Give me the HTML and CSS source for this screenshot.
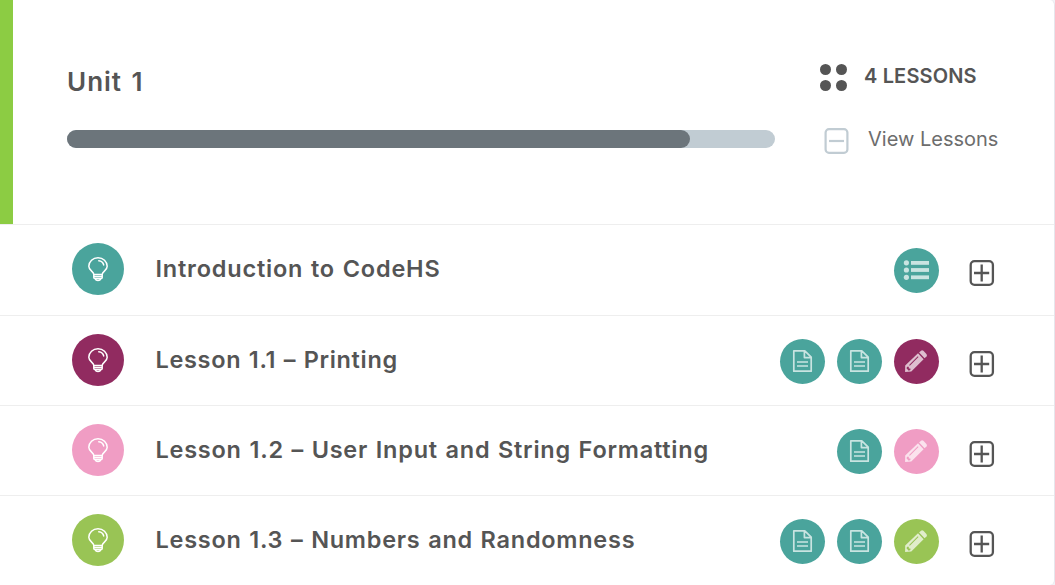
FILE: index.html
```html
<!DOCTYPE html>
<html lang="en">
<head>
<meta charset="utf-8">
<title>Unit 1</title>
<link rel="stylesheet" href="styles.css">
</head>
<body>
<svg class="symbols" aria-hidden="true">
  <symbol id="bulb" viewBox="0 0 52 52">
    <g fill="none" stroke="#fff" stroke-width="1.5" stroke-linecap="round" stroke-linejoin="round">
      <path d="M21.8 31.4C21.6 28.4 16.8 27.6 16.8 23.3a9.2 8.6 0 0 1 18.4 0c0 4.3-4.8 5.1-5 8.1z"/>
      <path d="M26.8 17.8c2.6.3 4.3 1.7 4.9 4.1"/>
      <path d="M21.8 31.4v3.2q0 .9.9.9h6.6q.9 0 .9-.9v-3.2M22 33.5h8M23.2 36c.9 2.1 4.7 2.1 5.6 0"/>
    </g>
  </symbol>
  <symbol id="doc" viewBox="0 0 45 45">
    <g fill="none" stroke="#fff" stroke-opacity=".7" stroke-width="1.7" stroke-linejoin="round">
      <path d="M13.8 11.8h11l6.4 6.4v14H13.8zM24.4 12v6.6h6.6M17 23h11M17 27h11"/>
    </g>
  </symbol>
  <symbol id="pencil" viewBox="0 0 45 45">
    <g fill="#fff" fill-opacity=".7">
      <path d="M25.1 13.4 27 11.7q1.2-1 2.4.1l3 3.1q1.1 1.3.1 2.5l-1.9 1.9z"/>
      <path fill-rule="evenodd" d="M24 14.3l5.6 6L17.3 32.4l-6.2.6.1-6.4zM23.8 17.3l-8.7 8.7.7.7 8.7-8.7zM13.1 27.7l-.6 1.6 2.2 2.4 1.7-.6v-1.7h-1.6v-1.7z"/>
    </g>
  </symbol>
  <symbol id="list" viewBox="0 0 45 45">
    <g fill="#fff" fill-opacity=".7">
      <circle cx="12.4" cy="14.8" r="2.6"/><circle cx="12.4" cy="22" r="2.6"/><circle cx="12.4" cy="29.3" r="2.6"/>
      <rect x="17" y="13" width="18" height="3.8"/><rect x="17" y="20.1" width="18" height="3.8"/><rect x="17" y="27.4" width="18" height="3.8"/>
    </g>
  </symbol>
  <symbol id="plus" viewBox="0 0 26 28">
    <g fill="none" stroke="#555" stroke-width="2.3">
      <rect x="1.7" y="2.2" width="22.2" height="23.6" rx="3.8"/>
      <path d="M5 14h15.2M12.7 5.6v16.8"/>
    </g>
  </symbol>
  <symbol id="minus" viewBox="0 0 26 28">
    <g fill="none" stroke="#c1ccd3" stroke-width="2.2">
      <rect x="1.6" y="2.2" width="21.8" height="23.6" rx="3.4"/>
      <path d="M5 14h15"/>
    </g>
  </symbol>
</svg>
<main class="card">
  <header class="unit">
    <div class="unit-main">
      <h1 class="unit-title">Unit 1</h1>
      <div class="progress"><div class="progress-fill"></div></div>
    </div>
    <div class="unit-side">
      <div class="count">
        <span class="dots"><i></i><i></i><i></i><i></i></span>
        <span class="count-text">4 LESSONS</span>
      </div>
      <a class="toggle">
        <svg class="box"><use href="#minus"/></svg>
        <span class="toggle-text">View Lessons</span>
      </a>
    </div>
  </header>
  <section class="lesson first">
    <span class="badge teal"><svg><use href="#bulb"/></svg></span>
    <h2 class="title intro">Introduction to CodeHS</h2>
    <div class="actions"><span class="action teal"><svg><use href="#list"/></svg></span></div>
    <svg class="box"><use href="#plus"/></svg>
  </section>
  <section class="lesson">
    <span class="badge plum"><svg><use href="#bulb"/></svg></span>
    <h2 class="title printing">Lesson 1.1 – Printing</h2>
    <div class="actions"><span class="action teal"><svg><use href="#doc"/></svg></span><span class="action teal"><svg><use href="#doc"/></svg></span><span class="action plum"><svg><use href="#pencil"/></svg></span></div>
    <svg class="box"><use href="#plus"/></svg>
  </section>
  <section class="lesson">
    <span class="badge pink"><svg><use href="#bulb"/></svg></span>
    <h2 class="title input">Lesson 1.2 – User Input and String Formatting</h2>
    <div class="actions"><span class="action teal"><svg><use href="#doc"/></svg></span><span class="action pink"><svg><use href="#pencil"/></svg></span></div>
    <svg class="box"><use href="#plus"/></svg>
  </section>
  <section class="lesson">
    <span class="badge green"><svg><use href="#bulb"/></svg></span>
    <h2 class="title numbers">Lesson 1.3 – Numbers and Randomness</h2>
    <div class="actions"><span class="action teal"><svg><use href="#doc"/></svg></span><span class="action teal"><svg><use href="#doc"/></svg></span><span class="action green"><svg><use href="#pencil"/></svg></span></div>
    <svg class="box"><use href="#plus"/></svg>
  </section>
</main>
</body>
</html>
```
FILE: styles.css
```css
* { box-sizing: border-box; }
body {
  margin: 0;
  background: #f1f2f6;
  color: #555;
  font-family: Inter, "Liberation Sans", sans-serif;
}
.symbols { display: none; }
.card {
  width: 1055px;
  height: 585px;
  overflow: hidden;
  background: #fff;
  border-right: 1px solid #e6e6ec;
  border-radius: 0 5px 5px 0;
}
.unit {
  display: flex;
  height: 224px;
  border-left: 13px solid #8ccc43;
  padding-left: 54px;
}
.unit-main { width: 708px; padding-top: 66px; }
.unit-title {
  margin: 0;
  font-size: 26px;
  line-height: 32px;
  font-weight: 600;
  letter-spacing: 1px;
  word-spacing: 2px;
  white-space: nowrap;
}
.progress {
  height: 18px;
  margin-top: 32px;
  border-radius: 9px;
  background: #c1ccd3;
}
.progress-fill {
  width: 88%;
  height: 18px;
  border-radius: 9px;
  background: #6c757b;
}
.unit-side { padding: 64px 0 0 45px; }
.count { display: flex; align-items: center; height: 26px; }
.dots {
  display: grid;
  grid-template-columns: 11px 11px;
  gap: 5px;
  width: 27px;
  margin-right: 17px;
}
.dots i { width: 11px; height: 11px; border-radius: 50%; background: #555; }
.count-text {
  font-size: 20px;
  line-height: 24px;
  font-weight: 600;
  letter-spacing: 0.15px;
  white-space: nowrap;
  margin-top: -2px;
}
.toggle { display: flex; align-items: center; margin: 37px 0 0 4px; height: 28px; }
.toggle-text {
  margin: -4px 0 0 18px;
  font-size: 20px;
  line-height: 24px;
  color: #6d6d6d;
  white-space: nowrap;
}
.box { display: block; width: 26px; height: 28px; flex: none; }
.lesson {
  display: flex;
  height: 90px;
  border-top: 1px solid #eee;
  padding: 18px 59px 0 72px;
}
.first { height: 91px; }
.badge, .action { display: block; flex: none; border-radius: 50%; }
.badge { width: 52px; height: 52px; }
.action { width: 45px; height: 45px; }
.badge svg, .action svg { display: block; width: 100%; height: 100%; }
.teal { background: #4aa49c; }
.plum { background: #912b60; }
.pink { background: #f09dc4; }
.green { background: #99c455; }
.title {
  flex: 1;
  margin: 10px 0 0 31.5px;
  font-size: 23.5px;
  line-height: 32px;
  font-weight: 600;
  word-spacing: 1px;
  white-space: nowrap;
}
.intro { letter-spacing: 0.8px; }
.printing { letter-spacing: 0.67px; }
.input { letter-spacing: 0.76px; }
.numbers { letter-spacing: 0.74px; }
.actions { display: flex; gap: 12px; margin: 5px 30px 0 0; }
.lesson > .box { margin-top: 16px; }
```
